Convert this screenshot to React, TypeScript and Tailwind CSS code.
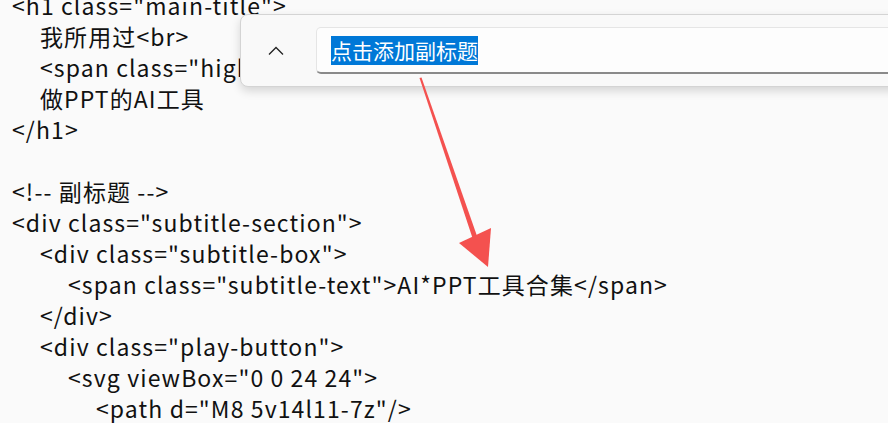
const lines: { indent: number; text: string }[] = [
  { indent: 0, text: '<h1 class="main-title">' },
  { indent: 1, text: '我所用过<br>' },
  { indent: 1, text: '<span class="highlight">AI</span>' },
  { indent: 1, text: '做PPT的AI工具' },
  { indent: 0, text: '</h1>' },
  { indent: 0, text: '' },
  { indent: 0, text: '<!-- 副标题 -->' },
  { indent: 0, text: '<div class="subtitle-section">' },
  { indent: 1, text: '<div class="subtitle-box">' },
  { indent: 2, text: '<span class="subtitle-text">AI*PPT工具合集</span>' },
  { indent: 1, text: '</div>' },
  { indent: 1, text: '<div class="play-button">' },
  { indent: 2, text: '<svg viewBox="0 0 24 24">' },
  { indent: 3, text: '<path d="M8 5v14l11-7z"/>' },
];

const indentClass = ['pl-0', 'pl-[28px]', 'pl-[56px]', 'pl-[84px]'];

export default function App() {
  return (
    <div className="relative w-[888px] h-[423px] overflow-hidden bg-[#fafafa] font-['Noto_Sans_CJK_SC','Noto_Sans',sans-serif] text-[#111]">
      {/* Code text */}
      <div className="-mt-[10px] pl-[12px] text-[23px] leading-[31px] tracking-[1.1px] whitespace-pre">
        {lines.map((l, i) => (
          <div key={i} className={`h-[31px] ${indentClass[l.indent]}`}>
            {l.text}
          </div>
        ))}
      </div>

      {/* Find popup */}
      <div className="absolute left-[240px] top-[14px] w-[700px] h-[73px] rounded-lg bg-[#f9f9f9] border border-[#d4d4d4] shadow-[0_4px_10px_rgba(0,0,0,0.15)] flex items-center">
        <div className="w-[75px] pl-[27px]">
          <svg width="16" height="10" viewBox="0 0 16 10" fill="none">
            <path d="M1 8.5L8 1.5L15 8.5" stroke="#222" strokeWidth="1.3" />
          </svg>
        </div>
        <div className="flex-1 h-[47px] bg-[#fdfdfd] rounded-l-[5px] border border-[#e5e5e5] border-b-2 border-b-[#8a8a8a] flex items-center pl-[14px]">
          <span className="bg-[#0078d7] text-white text-[21px] leading-[29px]">点击添加副标题</span>
        </div>
      </div>

      {/* Red arrow */}
      <svg className="absolute left-0 top-0 pointer-events-none" width="888" height="423" viewBox="0 0 888 423">
        <polygon points="419.5,78 421.5,77.5 477,236 472.5,238" fill="#f4514f" />
        <polygon points="459,243 491,228 488,267" fill="#f4514f" />
      </svg>
    </div>
  );
}
